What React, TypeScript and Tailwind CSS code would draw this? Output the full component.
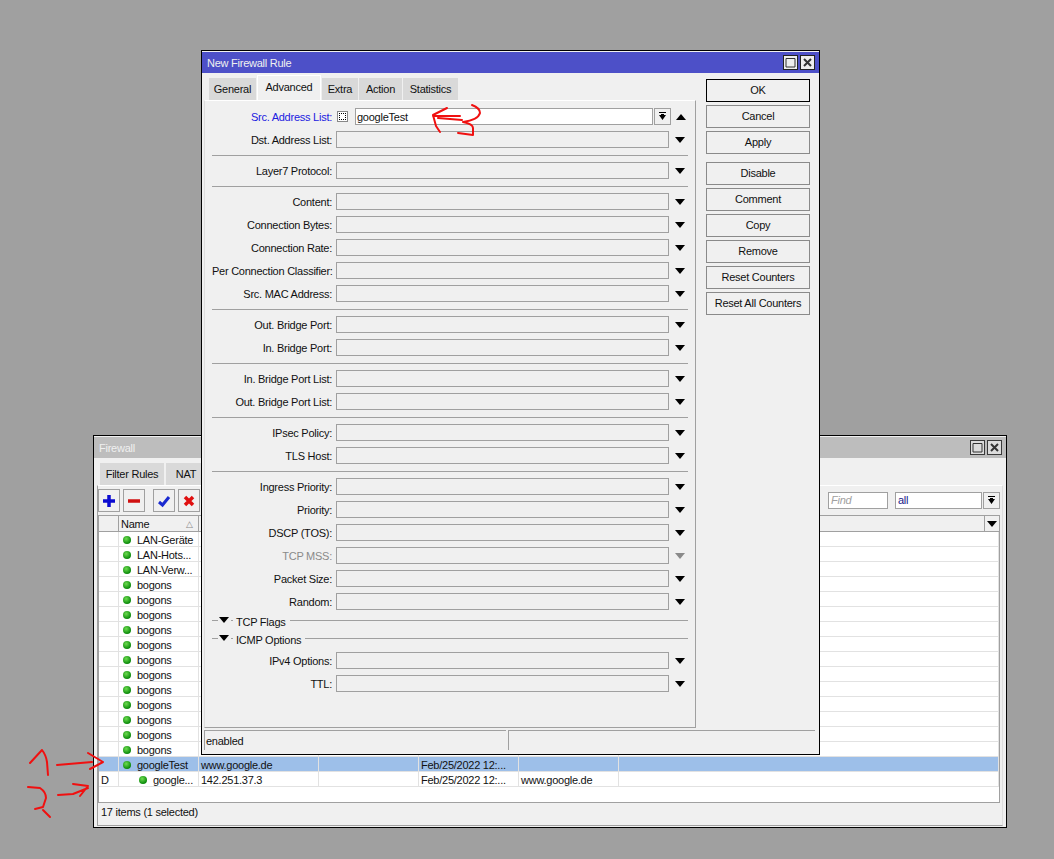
import type { ReactNode } from 'react';

type FieldRow = { label: string; disabled?: boolean };

// groups of the form, a separator line goes between each of them
const GROUPS: FieldRow[][] = [
  [{ label: 'Layer7 Protocol:' }],
  [
    { label: 'Content:' },
    { label: 'Connection Bytes:' },
    { label: 'Connection Rate:' },
    { label: 'Per Connection Classifier:' },
    { label: 'Src. MAC Address:' },
  ],
  [{ label: 'Out. Bridge Port:' }, { label: 'In. Bridge Port:' }],
  [{ label: 'In. Bridge Port List:' }, { label: 'Out. Bridge Port List:' }],
  [{ label: 'IPsec Policy:' }, { label: 'TLS Host:' }],
  [
    { label: 'Ingress Priority:' },
    { label: 'Priority:' },
    { label: 'DSCP (TOS):' },
    { label: 'TCP MSS:', disabled: true },
    { label: 'Packet Size:' },
    { label: 'Random:' },
  ],
];

const BUTTONS = [
  ['OK', 'Cancel', 'Apply'],
  ['Disable', 'Comment', 'Copy', 'Remove', 'Reset Counters', 'Reset All Counters'],
];

const RULES = [
  'LAN-Geräte',
  'LAN-Hots...',
  'LAN-Verw...',
  ...Array.from({ length: 12 }, () => 'bogons'),
];

function Arrow({ up, color = '#000' }: { up?: boolean; color?: string }) {
  return (
    <svg width="10" height="6" viewBox="0 0 10 6" className="shrink-0">
      <path d={up ? 'M0 6 L5 0 L10 6 Z' : 'M0 0 L10 0 L5 6 Z'} fill={color} />
    </svg>
  );
}

function BarArrow() {
  return (
    <svg width="9" height="9" viewBox="0 0 9 9">
      <path d="M1 0 H8 V1 H1 Z M1 3 H8 L4.5 8 Z M3 2 H6 V4 H3 Z" fill="#000" />
    </svg>
  );
}

function TitleButton({ close, dim }: { close?: boolean; dim?: boolean }) {
  return (
    <div
      className={`w-[15px] h-[15px] border flex items-center justify-center ${
        dim ? 'border-[#3a3a3a] bg-[#dcdcdc]' : 'border-[#222] bg-[#eeeeee]'
      }`}
    >
      <svg width="11" height="11" viewBox="0 0 11 11">
        {close ? (
          <path d="M2 2 L9 9 M9 2 L2 9" stroke="#333" strokeWidth="2" />
        ) : (
          <path d="M1 1.5 H10 V10 H1 Z" stroke="#333" strokeWidth="1" fill="none" />
        )}
      </svg>
    </div>
  );
}

function TitleBar({ title, active }: { title: string; active?: boolean }) {
  return (
    <div
      className={`h-[21px] shrink-0 flex items-center justify-between pl-[5px] pr-[4px] ${
        active ? 'bg-[#4d50c8]' : 'bg-[#bdbdbd]'
      }`}
    >
      <span className="text-[#f0f0f0] pt-px">{title}</span>
      <div className="flex gap-[2px]">
        <TitleButton dim={!active} />
        <TitleButton close dim={!active} />
      </div>
    </div>
  );
}

function Tab({ label, width, active }: { label: string; width: number; active?: boolean }) {
  return (
    <div
      style={{ width }}
      className={`flex items-center justify-center shrink-0 ${
        active
          ? 'h-[25px] bg-[#f0f0f0] border-t border-x border-white pb-[2px]'
          : 'h-[22px] bg-[#d9d9d9] pt-px'
      }`}
    >
      {label}
    </div>
  );
}

function Field({ label, disabled }: FieldRow) {
  return (
    <div className="flex items-center h-[17px]">
      <div className={`w-[120px] pt-px text-right whitespace-nowrap ${disabled ? 'text-[#8a8a8a]' : ''}`}>
        {label}
      </div>
      <div className="w-[333px] h-[17px] ml-[4px] border border-[#a0a0a0] bg-[#f0f0f0]" />
      <div className="ml-[6px]">
        <Arrow color={disabled ? '#8a8a8a' : '#000'} />
      </div>
    </div>
  );
}

function FoldRow({ label, className }: { label: string; className?: string }) {
  return (
    <div className={`flex items-center h-[18px] ${className ?? ''}`}>
      <div className="w-[6px] h-px bg-[#a0a0a0]" />
      <div className="ml-px">
        <Arrow />
      </div>
      <div className="w-[2px] h-px ml-[2px] bg-[#a0a0a0]" />
      <span className="ml-[3px] mt-[4px] whitespace-nowrap">{label}</span>
      <div className="flex-1 h-px ml-[4px] bg-[#a0a0a0]" />
    </div>
  );
}

function RuleForm() {
  return (
    <div className="pt-[7px] pl-[7px] pr-[7px]">
      <div className="flex flex-col gap-[6px]">
        <div className="flex items-center h-[17px]">
          <div className="w-[120px] pt-px text-right whitespace-nowrap text-[#2020e0]">Src. Address List:</div>
          <div className="w-[11px] h-[11px] ml-[5px] bg-white border border-[#888] flex items-center justify-center">
            <div className="w-[7px] h-[7px] border border-dotted border-black" />
          </div>
          <div className="w-[298px] h-[17px] ml-[7px] border border-[#a0a0a0] bg-white pl-px leading-[16px]">
            googleTest
          </div>
          <div className="w-[17px] h-[17px] ml-px border border-[#a0a0a0] flex items-center justify-center">
            <BarArrow />
          </div>
          <div className="ml-[5px]">
            <Arrow up />
          </div>
        </div>
        <Field label="Dst. Address List:" />
      </div>
      {GROUPS.map((group) => (
        <div key={group[0].label}>
          <div className="h-px mt-[7px] mb-[6px] bg-[#a0a0a0]" />
          <div className="flex flex-col gap-[6px]">
            {group.map((row) => (
              <Field key={row.label} {...row} />
            ))}
          </div>
        </div>
      ))}
      <FoldRow label="TCP Flags" className="mt-px" />
      <FoldRow label="ICMP Options" />
      <div className="flex flex-col gap-[6px] mt-[5px]">
        <Field label="IPv4 Options:" />
        <Field label="TTL:" />
      </div>
    </div>
  );
}

function StatusCell({ className, children }: { className: string; children?: ReactNode }) {
  return (
    <div className={`h-[20px] border-l border-t border-[#a0a0a0] pl-px leading-[20px] ${className}`}>
      {children}
    </div>
  );
}

function RuleWindow() {
  return (
    <div className="absolute left-[201px] top-[50px] w-[619px] h-[705px] border border-black bg-[#f0f0f0] py-px flex flex-col">
      <TitleBar title="New Firewall Rule" active />
      <div className="flex flex-1">
        <div className="w-[492px] ml-[2px] flex flex-col">
          <div className="h-[27px] flex items-end gap-px pl-[5px]">
            <Tab label="General" width={47} />
            <Tab label="Advanced" width={64} active />
            <Tab label="Extra" width={36} />
            <Tab label="Action" width={43} />
            <Tab label="Statistics" width={55} />
          </div>
          <div className="h-[628px] border-t border-t-white border-r border-b border-[#a0a0a0] border-l border-l-[#dddddd]">
            <RuleForm />
          </div>
          <div className="flex mt-[2px] gap-[2px]">
            <StatusCell className="w-[302px] shrink-0">enabled</StatusCell>
            <StatusCell className="w-[307px] shrink-0" />
          </div>
        </div>
        <div className="ml-[10px] mt-[6px] w-[104px] flex flex-col gap-[8px]">
          {BUTTONS.map((group) => (
            <div key={group[0]} className="flex flex-col gap-[3px]">
              {group.map((label) => (
                <div
                  key={label}
                  className={`h-[23px] border flex items-center justify-center whitespace-nowrap ${
                    label === 'OK' ? 'border-black' : 'border-[#8a8a8a]'
                  }`}
                >
                  {label}
                </div>
              ))}
            </div>
          ))}
        </div>
      </div>
    </div>
  );
}

function Dot() {
  return (
    <span className="inline-block w-[8px] h-[8px] rounded-full bg-[radial-gradient(circle_at_40%_35%,#6edc50,#0a8a0a_70%)] shrink-0" />
  );
}

function ToolButton({ children, className }: { children: ReactNode; className?: string }) {
  return (
    <div className={`w-[22px] h-[23px] border border-[#a0a0a0] flex items-center justify-center ${className ?? ''}`}>
      {children}
    </div>
  );
}

function Toolbar() {
  return (
    <div className="h-[23px] mt-[3px] flex items-center pr-[2px]">
      <ToolButton>
        <svg width="14" height="14" viewBox="0 0 14 14">
          <path d="M7 1 V13 M1 7 H13" stroke="#0a0ad0" strokeWidth="3.5" />
        </svg>
      </ToolButton>
      <ToolButton className="ml-[3px]">
        <svg width="14" height="14" viewBox="0 0 14 14">
          <path d="M1 7 H13" stroke="#d01010" strokeWidth="3.5" />
        </svg>
      </ToolButton>
      <ToolButton className="ml-[8px]">
        <svg width="14" height="14" viewBox="0 0 14 14">
          <path d="M2 8 L5.5 11 L12 3" stroke="#1a2ad0" strokeWidth="3" fill="none" />
        </svg>
      </ToolButton>
      <ToolButton className="ml-[3px]">
        <svg width="14" height="14" viewBox="0 0 14 14">
          <path d="M3 3 L11 11 M11 3 L3 11" stroke="#e01010" strokeWidth="3.5" />
        </svg>
      </ToolButton>
      <div className="ml-auto flex items-center">
        <div className="w-[60px] h-[17px] border border-[#a0a0a0] bg-white pl-[2px] leading-[15px] italic text-[#a0a0a0]">
          Find
        </div>
        <div className="w-[87px] h-[17px] ml-[7px] border border-[#a0a0a0] bg-white pl-[2px] leading-[15px] text-[#20208a]">
          all
        </div>
        <div className="w-[17px] h-[17px] ml-px border border-[#a0a0a0] flex items-center justify-center">
          <BarArrow />
        </div>
      </div>
    </div>
  );
}

const COLS = 'grid grid-cols-[20px_80px_120px_100px_100px_100px_380px]';
const CELL = 'h-[15px] border-r border-b border-[#e2e2e2] px-[2px] leading-[17px] whitespace-nowrap overflow-hidden';
const NAME_CELL = 'flex items-center gap-[6px] pt-[2px]';

function RuleRow({ name }: { name: string }) {
  return (
    <div className={COLS}>
      <div className={CELL} />
      <div className={`${CELL} ${NAME_CELL} pl-[4px]`}>
        <Dot />
        <span>{name}</span>
      </div>
      <div className={CELL} />
      <div className={CELL} />
      <div className={CELL} />
      <div className={CELL} />
      <div className={CELL} />
    </div>
  );
}

function FirewallTable() {
  return (
    <div className="mt-[3px] w-[902px] border-t border-x border-[#a0a0a0] border-b bg-white">
      <div className={`${COLS} h-[16px] bg-[#f0f0f0] border-b border-[#a0a0a0]`}>
        <div className="border-r border-[#a0a0a0]" />
        <div className="border-r border-[#a0a0a0] pl-[2px] leading-[16px] flex justify-between pr-[5px]">
          <span>Name</span>
          <span className="text-[9px] text-[#888]">△</span>
        </div>
        <div />
        <div />
        <div />
        <div />
        <div className="flex justify-end">
          <div className="w-[15px] border-l border-[#a0a0a0] flex items-center justify-center">
            <Arrow />
          </div>
        </div>
      </div>
      {RULES.map((name, i) => (
        <RuleRow key={i} name={name} />
      ))}
      <div className={`${COLS} bg-[#9dbfe9]`}>
        <div className={CELL} />
        <div className={`${CELL} ${NAME_CELL} pl-[4px]`}>
          <Dot />
          <span>googleTest</span>
        </div>
        <div className={CELL}>www.google.de</div>
        <div className={CELL} />
        <div className={CELL}>Feb/25/2022 12:...</div>
        <div className={CELL} />
        <div className={CELL} />
      </div>
      <div className={COLS}>
        <div className={CELL}>D</div>
        <div className={`${CELL} ${NAME_CELL} pl-[20px]`}>
          <Dot />
          <span>google...</span>
        </div>
        <div className={CELL}>142.251.37.3</div>
        <div className={CELL} />
        <div className={CELL}>Feb/25/2022 12:...</div>
        <div className={CELL}>www.google.de</div>
        <div className={CELL} />
      </div>
      <div className="h-[15px]" />
    </div>
  );
}

function FirewallWindow() {
  return (
    <div className="absolute left-[93px] top-[435px] w-[914px] h-[393px] border border-black bg-[#f0f0f0] py-px flex flex-col">
      <TitleBar title="Firewall" />
      <div className="h-[27px] flex items-end gap-[2px] pl-[6px]">
        <Tab label="Filter Rules" width={64} />
        <Tab label="NAT" width={40} />
      </div>
      <div className="ml-[3px] mr-[3px] flex-1 border-t border-t-white border-b border-b-[#a0a0a0] border-l border-l-[#a0a0a0] border-r border-r-[#dddddd]">
        <Toolbar />
        <FirewallTable />
        <div className="pl-[3px] leading-[18px]">17 items (1 selected)</div>
      </div>
    </div>
  );
}

function Scribbles() {
  return (
    <svg
      width="1054"
      height="859"
      viewBox="0 0 1054 859"
      fill="none"
      stroke="#f01010"
      strokeWidth="2"
      strokeLinecap="round"
      strokeLinejoin="round"
      className="absolute left-0 top-0 pointer-events-none"
    >
      <path d="M447 108 L433 115 L436 126 L440 132 M433 116 L460 116 M438 118 L462 120" />
      <path d="M472 105 Q480 108 480 113 Q478 120 463 122 Q473 124 473 128 L473 135 L458 133" />
      <path d="M30 763 L42 750 Q46 755 47 762 L48 775" />
      <path d="M57 765 L92 762 M88 753 L103 762 L90 769" />
      <path d="M28 787 L40 788 Q46 792 46 798 L43 807 L35 809 M43 810 L50 817" />
      <path d="M58 795 L73 794 L88 788 M73 784 L88 786 L80 796" />
    </svg>
  );
}

export default function App() {
  return (
    <div className="relative w-[1054px] h-[859px] overflow-hidden bg-[#a0a0a0] text-[11px] tracking-[-0.25px] text-[#111] font-['Liberation_Sans',Arial,sans-serif]">
      <FirewallWindow />
      <RuleWindow />
      <Scribbles />
    </div>
  );
}
